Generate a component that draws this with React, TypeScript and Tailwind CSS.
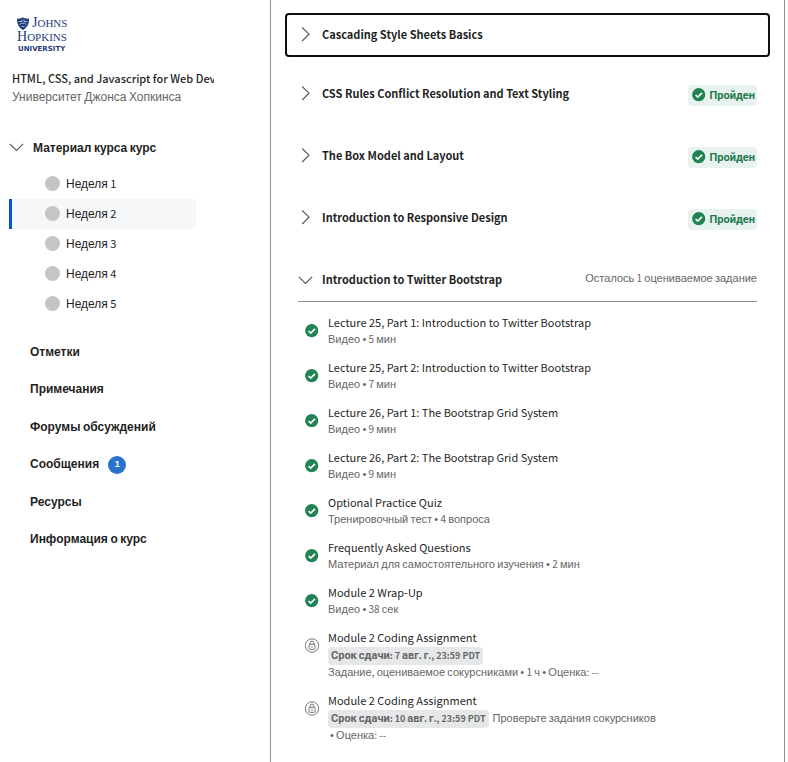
import React from "react";

const LATIN = "font-['Noto_Sans_CJK_SC','Noto_Sans',sans-serif]";

const cyrillicStyles = {
  sm: "font-['Liberation_Sans',Arial,sans-serif] text-[11px] leading-none",
  smBold: "font-[Roboto,'Liberation_Sans',sans-serif] text-[11px] leading-none",
  md: "font-['Liberation_Sans',Arial,sans-serif] text-[12px] leading-none",
};

/* Latin runs use the humanist face, Cyrillic runs use a grotesque one. */
function Mixed({ text, size }: { text: string; size: keyof typeof cyrillicStyles }) {
  const runs = text.match(/[\u0400-\u04FF•]+|[^\u0400-\u04FF•]+/g) ?? [];
  return (
    <>
      {runs.map((run, i) =>
        /[\u0400-\u04FF•]/.test(run) ? (
          <span key={i} className={cyrillicStyles[size]}>
            {run}
          </span>
        ) : (
          run
        ),
      )}
    </>
  );
}

function Chevron({ open = false }: { open?: boolean }) {
  return (
    <svg className="size-4 shrink-0" viewBox="0 0 16 16" fill="none" stroke="#555" strokeWidth="1.1" aria-hidden="true">
      {open ? <path d="M.8 4.800 7.500 11.500 14.200 4.800" /> : <path d="M4.200 1.500 11 8.200 4.200 15" />}
    </svg>
  );
}

function Check() {
  return (
    <svg className="size-[14px] shrink-0" viewBox="0 0 14 14" aria-hidden="true">
      <circle cx="6.7" cy="6.7" r="6.6" fill="#1f8354" />
      <path d="M3.600 7 5.700 9 10 4.800" fill="none" stroke="#fff" strokeWidth="1.7" />
    </svg>
  );
}

function Lock() {
  return (
    <svg className="size-[15px] shrink-0" viewBox="0 0 15 15" fill="none" stroke="#666" strokeWidth="0.9" aria-hidden="true">
      <circle cx="7" cy="7.500" r="6.700" />
      <rect x="4" y="6.300" width="6" height="5" rx="0.5" />
      <path d="M5.100 6.300V5a1.900 1.900 0 0 1 3.800 0v1.300M7 7.800v2" />
    </svg>
  );
}

function Logo() {
  return (
    <svg className="h-9 w-[54px]" viewBox="0 0 54 36" fill="#1f3b78" role="img" aria-label="Johns Hopkins University">
      <g transform="translate(0 1)">
        <path d="M0 1.500C2 2 4 1.500 6 .5c2 1 4 1.500 6 1 .3 5-1.500 9-6 11.500C1.500 10.500-.3 6.500 0 1.500Z" />
        <path d="M1.500 4.500h3.500v-2M7 2.500v2h3.500M2.500 7.500l2-1.200h3l2 1.200M4.500 9.500h3" fill="none" stroke="#b4c4e0" strokeWidth="0.9" />
      </g>
      <text x="15" y="11" fontFamily="Liberation Serif, serif" fontSize="14">
        J<tspan fontSize="11">OHNS</tspan>
      </text>
      <text x="0" y="25" fontFamily="Liberation Serif, serif" fontSize="14">
        H<tspan fontSize="11">OPKINS</tspan>
      </text>
      <text x="1" y="35" fontFamily="DejaVu Sans, sans-serif" fontWeight="bold" fontSize="7">
        UNIVERSITY
      </text>
    </svg>
  );
}

const weeks = [1, 2, 3, 4, 5];
const links = ["Отметки", "Примечания", "Форумы обсуждений", "Сообщения", "Ресурсы", "Информация о курс"];

function Sidebar() {
  return (
    <aside className="w-[271px] shrink-0 border-r border-[#8f9197] pt-4">
      <div className="pl-[17px]">
        <Logo />
      </div>
      <div className="mt-[17px] ml-3 w-[202px]">
        <h1 className="overflow-hidden text-[11px] leading-[18px] font-medium whitespace-nowrap">
          HTML, CSS, and Javascript for Web Development
        </h1>
        <p className="text-[11px] leading-[18px] text-[#666]">
          <Mixed size="md" text="Университет Джонса Хопкинса" />
        </p>
      </div>
      <nav>
        <button type="button" className="mt-8 ml-[9px] flex h-5 items-center gap-2 font-bold">
          <Chevron open />
          <span className="text-[11px] leading-5">
            <Mixed size="md" text="Материал курса курс" />
          </span>
        </button>
        <ul className="mt-3 mr-[74px] ml-[9px]">
          {weeks.map((w) => (
            <li key={w}>
              <a
                href={`#week-${w}`}
                className={`flex h-[30px] items-center gap-[6px] rounded-r-sm border-l-[3px] pb-px pl-[33px] text-[11px] ${
                  w === 2 ? "border-[#0056d2] bg-[#f5f7f9]" : "border-transparent"
                }`}
              >
                <span className="size-[15px] rounded-full bg-[#c4c5c7]" />
                <span className="pb-px leading-5">
                  <Mixed size="md" text={`Неделя ${w}`} />
                </span>
              </a>
            </li>
          ))}
        </ul>
        <ul className="mt-[13px] ml-[30px] grid h-[225px] grid-rows-6 text-[11px] font-bold">
          {links.map((label) => (
            <li key={label} className="flex items-center">
              <a href="#section" className="flex items-center gap-[9px] leading-5">
                <span>
                  <Mixed size="md" text={label} />
                </span>
                {label === "Сообщения" && (
                  <span className="mt-[3px] flex size-[18px] items-center justify-center rounded-full bg-[#2a73cc] pb-[2px] font-['Liberation_Sans',Arial,sans-serif] text-[9px] text-white">
                    1
                  </span>
                )}
              </a>
            </li>
          ))}
        </ul>
      </nav>
    </aside>
  );
}

const sections = ["CSS Rules Conflict Resolution and Text Styling", "The Box Model and Layout", "Introduction to Responsive Design"];

type Item = { title: string; meta: string; due?: string; extra?: string };

const items: Item[] = [
  { title: "Lecture 25, Part 1: Introduction to Twitter Bootstrap", meta: "Видео • 5 мин" },
  { title: "Lecture 25, Part 2: Introduction to Twitter Bootstrap", meta: "Видео • 7 мин" },
  { title: "Lecture 26, Part 1: The Bootstrap Grid System", meta: "Видео • 9 мин" },
  { title: "Lecture 26, Part 2: The Bootstrap Grid System", meta: "Видео • 9 мин" },
  { title: "Optional Practice Quiz", meta: "Тренировочный тест • 4 вопроса" },
  { title: "Frequently Asked Questions", meta: "Материал для самостоятельного изучения • 2 мин" },
  { title: "Module 2 Wrap-Up", meta: "Видео • 38 сек" },
  {
    title: "Module 2 Coding Assignment",
    due: "Срок сдачи: 7 авг. г., 23:59 PDT",
    meta: "Задание, оцениваемое сокурсниками • 1 ч • Оценка: --",
  },
  {
    title: "Module 2 Coding Assignment",
    due: "Срок сдачи: 10 авг. г., 23:59 PDT",
    extra: "Проверьте задания сокурсников",
    meta: "• Оценка: --",
  },
];

function ItemRow({ item }: { item: Item }) {
  return (
    <li>
      <a href="#item" className="flex">
        <span className={`w-[23px] shrink-0 ${item.due ? "pt-[9px]" : "pt-[10px]"}`}>{item.due ? <Lock /> : <Check />}</span>
        <div className="text-[10px] leading-[14px] text-[#666]">
          <div className="pb-[2px] text-[11px] leading-4 text-[#1f1f1f]">{item.title}</div>
          {item.due && (
            <div className="flex h-[18px] items-center gap-1">
              <span className="rounded-sm bg-[#e5e7e8] px-[3px] text-[9px] leading-[18px] font-bold">
                <Mixed size="smBold" text={item.due} />
              </span>
              {item.extra && (
                <span className="pb-[2px]">
                  <Mixed size="sm" text={item.extra} />
                </span>
              )}
            </div>
          )}
          <div className={`pb-[2px] ${item.extra ? "pl-[2px]" : ""}`}>
            <Mixed size="sm" text={item.meta} />
          </div>
        </div>
      </a>
    </li>
  );
}

export default function App() {
  return (
    <div className={`flex min-h-screen bg-white text-[#1f1f1f] ${LATIN}`}>
      <Sidebar />
      <main className="mr-[3px] min-w-0 flex-1 border-r border-[#8f9197] px-[14px] pt-[13px]">
        <button
          type="button"
          className="flex h-11 w-full items-center gap-2 rounded-sm border-2 border-[#0f0f0f] pb-[2px] pl-[11px] text-[11px] font-bold"
        >
          <Chevron />
          Cascading Style Sheets Basics
        </button>
        <div className="mt-[6px] px-[13px]">
          {sections.map((title) => (
            <button key={title} type="button" className="flex h-[62px] w-full items-center gap-2 pb-[2px] text-left text-[11px] font-bold">
              <Chevron />
              <span className="flex-1">{title}</span>
              <span className="mt-1 flex h-[21px] items-center gap-[3px] rounded-sm bg-[#e8f2ee] pr-[2px] pl-1 text-[#1f7a50]">
                <Check />
                <Mixed size="smBold" text="Пройден" />
              </span>
            </button>
          ))}
          <button type="button" className="flex h-[53px] w-full items-center gap-2 border-b border-[#8f9197] pt-[9px] text-left text-[11px] font-bold">
            <Chevron open />
            <span className="flex-1">Introduction to Twitter Bootstrap</span>
            <span className="mb-1 text-[10px] font-normal text-[#666]">
              <Mixed size="sm" text="Осталось 1 оцениваемое задание" />
            </span>
          </button>
          <ul className="mt-3 flex flex-col gap-[11px] pl-[7px]">
            {items.map((item, i) => (
              <ItemRow key={i} item={item} />
            ))}
          </ul>
        </div>
      </main>
    </div>
  );
}
